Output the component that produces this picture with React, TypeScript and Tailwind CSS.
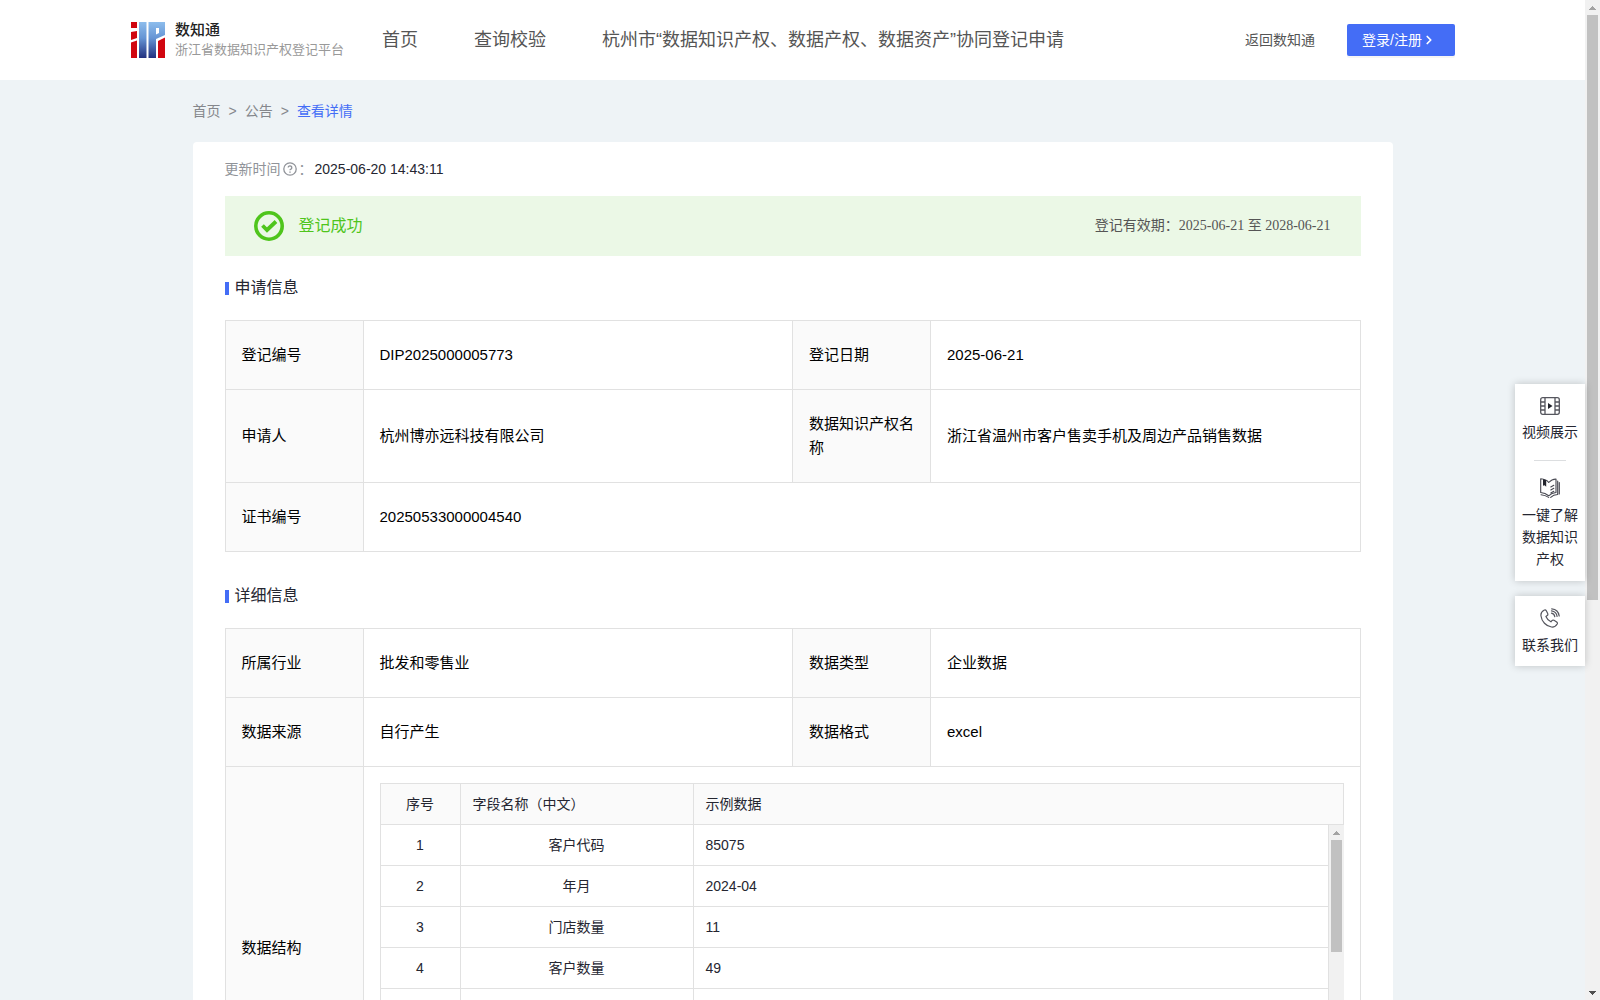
import React from "react";
import { ChevronRight } from "lucide-react";

const NAVIGATION = [
  { name: "首页", href: "#" },
  { name: "查询校验", href: "#" },
  { name: "杭州市“数据知识产权、数据产权、数据资产”协同登记申请", href: "#" },
];

const FIELDS = [
  { id: 1, name: "客户代码", sample: "85075" },
  { id: 2, name: "年月", sample: "2024-04" },
  { id: 3, name: "门店数量", sample: "11" },
  { id: 4, name: "客户数量", sample: "49" },
];

const LogoMark = () => (
  <svg width="36" height="36" viewBox="0 0 36 36" aria-hidden="true">
    <defs>
      <linearGradient id="logo-blue" gradientUnits="userSpaceOnUse" x1="0" y1="0" x2="0" y2="36">
        <stop offset="0" stopColor="#8dbdec" />
        <stop offset="0.45" stopColor="#6594d4" />
        <stop offset="1" stopColor="#22307f" />
      </linearGradient>
    </defs>
    <path d="M1 0h6v6H1zM1 10l6-1v7l-6 2zM1 20.500l6-2V36H1z" fill="#d10610" />
    <path d="M9 0h7.500v36H9z" fill="url(#logo-blue)" />
    <path d="M18.500 0H35v13l-9 4v19h-7.500z" fill="url(#logo-blue)" />
    <path d="M26 6h3v5l-3 1.500z" fill="#fff" />
    <path d="M28 19l7-3.500V36h-7z" fill="#d10610" />
  </svg>
);

const FilmIcon = () => (
  <svg
    width="20"
    height="18"
    viewBox="0 0 20 18"
    fill="none"
    stroke="#55565e"
    strokeWidth="1.3"
    aria-hidden="true"
  >
    <rect x="0.7" y="0.7" width="18.6" height="16.6" rx="2" />
    <path d="M5 1v16M15 1v16M1 5h4M1 9h4M1 13h4M15 5h4M15 9h4M15 13h4" />
    <path d="M8 6v6l4.500-3z" fill="#22232c" stroke="none" />
  </svg>
);

const BookIcon = () => (
  <svg
    width="20"
    height="20"
    viewBox="0 0 20 20"
    fill="none"
    stroke="#45464f"
    strokeWidth="1.1"
    strokeLinejoin="round"
    strokeLinecap="round"
    aria-hidden="true"
  >
    <path d="M.7.8C4 1 7 2.200 8.700 4.500 10.500 2.500 13 1.200 16 1v13.500c-3 .3-5.500 1.500-7.300 3.300C6.500 16 3.500 14.800.7 14.500z" />
    <path d="M17.700 3v13.500c-3 .1-5 .8-7 2.800M19.300 4.500v11.500M1 16.800c3 .3 5.500 1.200 7.700 2.600" />
    <path d="M10.800 9l3-1.700M10.800 12l3-1.700M10.800 15l3-1.700" />
    <path d="M3 1l3.200 1.200v6.600L4.600 7.200 3 7.800z" fill="#22232c" stroke="none" />
  </svg>
);

const PhoneIcon = () => (
  <svg
    width="20"
    height="20"
    viewBox="0 0 20 20"
    fill="none"
    stroke="#55565e"
    strokeWidth="1.2"
    strokeLinecap="round"
    strokeLinejoin="round"
    aria-hidden="true"
  >
    <path d="M4 2.200C2 3.200.6 5.200 1 8c.7 5.500 5 10.200 10.500 11 2.500.3 4.500-1 5.700-3 .4-.8.100-1.500-.5-2l-2.700-1.700c-.8-.5-1.500-.3-2.100.3l-1 1.200c-2.300-1-4-2.800-5-5.200l1.300-1c.7-.5.8-1.200.5-2L6.300 2.800C5.800 1.900 5 1.700 4 2.200z" />
    <path d="M11.500 5.200c1.800.4 3 1.700 3.300 3.500M11.500 2.800c3 .4 5.200 2.600 5.600 5.600M11.700.8c4 .3 7 3.200 7.500 7.200" />
  </svg>
);

const SuccessIcon = () => (
  <svg width="30" height="30" viewBox="0 0 30 30" fill="none" stroke="#4fc51c" aria-hidden="true">
    <circle cx="15" cy="15" r="13.200" strokeWidth="3.600" />
    <path d="M8.500 14.500l4.500 4.500 9-8.500" strokeWidth="3.800" />
  </svg>
);

const HelpIcon = () => (
  <svg width="14" height="14" viewBox="0 0 14 14" fill="none" stroke="#909399" aria-hidden="true">
    <circle cx="7" cy="7" r="6.200" strokeWidth="1.3" />
    <path d="M5.200 5.600a1.800 1.700 0 1 1 2.700 1.500c-.6.300-.9.600-.9 1.200" strokeWidth="1.3" />
    <path d="M7 9.400v1.300" strokeWidth="1.4" />
  </svg>
);

const ArrowUp = () => (
  <svg width="7" height="4" viewBox="0 0 7 4" fill="#a3a3a3" aria-hidden="true">
    <path d="M3 0h1v1h1v1h1v1h1v1H0V3h1V2h1V1h1z" />
  </svg>
);

const ArrowDown = () => (
  <svg width="7" height="4" viewBox="0 0 7 4" fill="#505050" aria-hidden="true">
    <path d="M0 0h7v1H6v1H5v1H4v1H3V3H2V2H1V1H0z" />
  </svg>
);

const Header = () => (
  <header className="flex h-20 items-center bg-white px-[130px]">
    <a href="#" className="flex w-[252px] shrink-0 items-center gap-[9px]">
      <LogoMark />
      <span className="flex flex-col whitespace-nowrap">
        <span className="text-[15px] leading-5 font-medium text-[#222222]">数知通</span>
        <span className="text-[13px] leading-5 text-[#999999]">浙江省数据知识产权登记平台</span>
      </span>
    </a>
    <nav className="flex gap-14 whitespace-nowrap text-lg leading-6 text-[#555555]">
      {NAVIGATION.map((item) => (
        <a key={item.name} href={item.href}>
          {item.name}
        </a>
      ))}
    </nav>
    <div className="ml-auto flex items-center gap-8 whitespace-nowrap text-sm">
      <a href="#" className="text-[#555555]">
        返回数知通
      </a>
      <button
        type="button"
        className="flex h-8 w-[108px] items-center rounded-xs bg-[#446df6] px-[15px] text-white shadow-[0_2px_0_rgba(0,0,0,0.04)]"
      >
        登录/注册
        <ChevronRight size={14} strokeWidth={3} />
      </button>
    </div>
  </header>
);

const SectionTitle = ({ children }: { children: React.ReactNode }) => (
  <h2 className="flex h-16 items-center gap-[6px] text-base text-[#252631]">
    <span className="h-[13px] w-1 bg-[#446df6]" />
    {children}
  </h2>
);

const Label = ({ children }: { children: React.ReactNode }) => (
  <th
    scope="row"
    className="border border-[#e1e1e1] bg-[#fafafa] pr-[14px] pl-4 py-[22px] text-left font-normal"
  >
    {children}
  </th>
);

const Value = ({ children, colSpan }: { children: React.ReactNode; colSpan?: number }) => (
  <td colSpan={colSpan} className="border border-[#e1e1e1] px-4 py-[22px]">
    {children}
  </td>
);

const FieldTable = () => (
  <div className="relative text-sm leading-5 text-[#252631]">
    <table className="w-full table-fixed border-collapse">
      <colgroup>
        <col className="w-20" />
        <col className="w-[233px]" />
        <col />
        <col className="w-[15px]" />
      </colgroup>
      <thead>
        <tr className="h-[41px] bg-[#fafafa]">
          <th className="border border-[#e1e1e1] font-normal">序号</th>
          <th className="border border-[#e1e1e1] px-3 text-left font-normal">字段名称（中文）</th>
          <th colSpan={2} className="border border-[#e1e1e1] px-3 text-left font-normal">
            示例数据
          </th>
        </tr>
      </thead>
      <tbody>
        {FIELDS.map((field) => (
          <tr key={field.id} className="h-[41px]">
            <td className="border border-[#e1e1e1] text-center">{field.id}</td>
            <td className="border border-[#e1e1e1] text-center">{field.name}</td>
            <td className="border border-[#e1e1e1] px-3">{field.sample}</td>
            <td />
          </tr>
        ))}
        <tr className="h-[123px]">
          <td className="border border-[#e1e1e1]" />
          <td className="border border-[#e1e1e1]" />
          <td className="border border-[#e1e1e1]" />
          <td />
        </tr>
      </tbody>
    </table>
    <div className="absolute top-[42px] right-0 bottom-0 flex w-[15px] flex-col items-center bg-[#f1f1f1]">
      <span className="flex h-[15px] items-center">
        <ArrowUp />
      </span>
      <span className="h-28 w-[11px] bg-[#c1c1c1]" />
    </div>
  </div>
);

const Detail = () => (
  <main className="mx-auto w-[1200px] max-w-full">
    <div className="flex h-[62px] items-center gap-2 text-sm text-[#85878c]">
      <a href="#">首页</a>
      <span>&gt;</span>
      <a href="#">公告</a>
      <span>&gt;</span>
      <a href="#" className="text-[#446df6]">
        查看详情
      </a>
    </div>
    <div className="rounded-t bg-white px-8 pb-8">
      <div className="flex h-[54px] items-center text-sm text-[#909399]">
        更新时间
        <span className="ml-0.5">
          <HelpIcon />
        </span>
        <span className="ml-0.5">：</span>
        <span className="ml-0.5 text-[#252631]">2025-06-20 14:43:11</span>
      </div>
      <div className="flex h-15 items-center bg-[#ebf8e6] pr-[30px] pl-[29px]">
        <SuccessIcon />
        <span className="ml-[15px] text-base text-[#4fc51c]">登记成功</span>
        <span className="ml-auto font-['Liberation_Serif','Noto_Sans_CJK_SC',serif] text-sm text-[#555555]">
          登记有效期：2025-06-21 至 2028-06-21
        </span>
      </div>

      <SectionTitle>申请信息</SectionTitle>
      <table className="w-full table-fixed border-collapse text-[15px] leading-6 text-black">
        <colgroup>
          <col className="w-[138px]" />
          <col />
          <col className="w-[138px]" />
          <col />
        </colgroup>
        <tbody>
          <tr>
            <Label>登记编号</Label>
            <Value>DIP2025000005773</Value>
            <Label>登记日期</Label>
            <Value>2025-06-21</Value>
          </tr>
          <tr>
            <Label>申请人</Label>
            <Value>杭州博亦远科技有限公司</Value>
            <Label>数据知识产权名称</Label>
            <Value>浙江省温州市客户售卖手机及周边产品销售数据</Value>
          </tr>
          <tr>
            <Label>证书编号</Label>
            <Value colSpan={3}>20250533000004540</Value>
          </tr>
        </tbody>
      </table>

      <div className="mt-3">
        <SectionTitle>详细信息</SectionTitle>
      </div>
      <table className="w-full table-fixed border-collapse text-[15px] leading-6 text-black">
        <colgroup>
          <col className="w-[138px]" />
          <col />
          <col className="w-[138px]" />
          <col />
        </colgroup>
        <tbody>
          <tr>
            <Label>所属行业</Label>
            <Value>批发和零售业</Value>
            <Label>数据类型</Label>
            <Value>企业数据</Value>
          </tr>
          <tr>
            <Label>数据来源</Label>
            <Value>自行产生</Value>
            <Label>数据格式</Label>
            <Value>excel</Value>
          </tr>
          <tr>
            <Label>数据结构</Label>
            <td colSpan={3} className="border border-[#e1e1e1] p-4">
              <FieldTable />
            </td>
          </tr>
        </tbody>
      </table>
    </div>
  </main>
);

const SideTools = () => (
  <aside className="absolute top-96 right-[15px] flex w-[70px] flex-col gap-[15px] text-center text-sm leading-[22px] text-[#252631]">
    <div className="flex flex-col items-center bg-white px-[7px] pt-[13px] pb-[11px] shadow-[0_0_8px_rgba(0,0,0,0.2)]">
      <a href="#" className="flex flex-col items-center gap-[6px]">
        <FilmIcon />
        视频展示
      </a>
      <span className="mt-[17px] mb-[17px] h-px w-8 bg-[#dcdee0]" />
      <a href="#" className="flex flex-col items-center gap-[6px]">
        <BookIcon />
        一键了解数据知识产权
      </a>
    </div>
    <div className="flex flex-col items-center bg-white px-[7px] pt-3 pb-[10px] shadow-[0_0_8px_rgba(0,0,0,0.2)]">
      <a href="#" className="flex flex-col items-center gap-[6px]">
        <PhoneIcon />
        联系我们
      </a>
    </div>
  </aside>
);

const PageScrollbar = () => (
  <div className="flex w-[15px] shrink-0 flex-col items-center bg-[#f1f1f1]">
    <span className="flex h-[15px] items-center">
      <ArrowUp />
    </span>
    <span className="h-[585px] w-[11px] bg-[#c1c1c1]" />
    <span className="mt-auto flex h-[15px] items-center">
      <ArrowDown />
    </span>
  </div>
);

const App = () => {
  return (
    <div className="relative flex h-screen overflow-hidden bg-[#eef3f6] font-['Liberation_Sans','Noto_Sans_CJK_SC',sans-serif]">
      <div className="min-w-0 flex-1">
        <Header />
        <Detail />
      </div>
      <SideTools />
      <PageScrollbar />
    </div>
  );
};

export default App;
